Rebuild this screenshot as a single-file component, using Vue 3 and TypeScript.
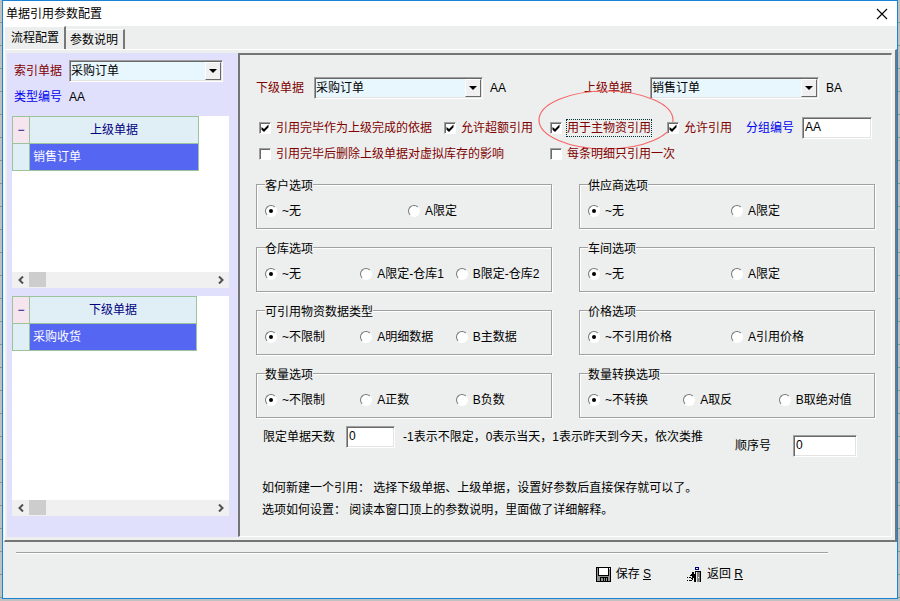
<script setup lang="ts">
import { reactive, ref } from 'vue'

interface OptionGroup {
  key: string
  title: string
  options: string[]
}

const documents = ['采购订单', '销售订单', '采购收货']
const indexDoc = ref('采购订单')
const lowerDoc = ref('采购订单')
const upperDoc = ref('销售订单')
const groupCode = ref('AA')
const dayLimit = ref('0')
const sequence = ref('0')
const activeTab = ref('流程配置')
const tabs = ['流程配置', '参数说明']

const lists = [
  { title: '上级单据', rows: ['销售订单'], kind: 'upper' },
  { title: '下级单据', rows: ['采购收货'], kind: 'lower' },
]

const flags = reactive([
  { id: 'basis', label: '引用完毕作为上级完成的依据', on: true },
  { id: 'excess', label: '允许超额引用', on: true },
  { id: 'material', label: '用于主物资引用', on: true },
  { id: 'allow', label: '允许引用', on: true },
])
const removeEffect = ref(false)
const onceOnly = ref(false)

const groups: OptionGroup[] = [
  { key: 'customer', title: '客户选项', options: ['~无', 'A限定'] },
  { key: 'supplier', title: '供应商选项', options: ['~无', 'A限定'] },
  { key: 'store', title: '仓库选项', options: ['~无', 'A限定-仓库1', 'B限定-仓库2'] },
  { key: 'workshop', title: '车间选项', options: ['~无', 'A限定'] },
  { key: 'dataType', title: '可引用物资数据类型', options: ['~不限制', 'A明细数据', 'B主数据'] },
  { key: 'price', title: '价格选项', options: ['~不引用价格', 'A引用价格'] },
  { key: 'quantity', title: '数量选项', options: ['~不限制', 'A正数', 'B负数'] },
  { key: 'convert', title: '数量转换选项', options: ['~不转换', 'A取反', 'B取绝对值'] },
]
const chosen = reactive<Record<string, string>>(
  Object.fromEntries(groups.map((g) => [g.key, g.options[0]])),
)
</script>

<template>
  <div class="dialog">
    <header class="titlebar">
      <span>单据引用参数配置</span>
      <button class="close" type="button" aria-label="关闭">
        <svg width="12" height="12" viewBox="0 0 12 12"><path d="M1 1l10 10M11 1L1 11" stroke="#000" stroke-width="1.1" fill="none" /></svg>
      </button>
    </header>

    <nav class="tabs">
      <button
        v-for="t in tabs"
        :key="t"
        type="button"
        class="tab"
        :class="{ active: t === activeTab }"
        @click="activeTab = t"
      >{{ t }}</button>
    </nav>

    <div class="page">
      <aside class="side">
        <div class="side-form">
          <label class="maroon" for="index-doc">索引单据</label>
          <span class="combo">
            <select id="index-doc" v-model="indexDoc">
              <option v-for="d in documents" :key="d">{{ d }}</option>
            </select>
            <span class="drop"></span>
          </span>
          <span class="blue">类型编号</span>
          <span>AA</span>
        </div>

        <section v-for="l in lists" :key="l.kind" class="list" :class="l.kind">
          <table>
            <thead>
              <tr><th class="mark">−</th><th>{{ l.title }}</th></tr>
            </thead>
            <tbody>
              <tr v-for="r in l.rows" :key="r"><td class="lead"></td><td class="picked">{{ r }}</td></tr>
            </tbody>
          </table>
          <div class="scroll">
            <button type="button" aria-label="向左"><svg width="6" height="8" viewBox="0 0 6 8"><path d="M5 .5L1.5 4 5 7.5" /></svg></button>
            <span class="thumb"></span>
            <button type="button" aria-label="向右"><svg width="6" height="8" viewBox="0 0 6 8"><path d="M1 .5L4.500 4 1 7.5" /></svg></button>
          </div>
        </section>
      </aside>

      <main class="panel">
        <div class="docs">
          <label class="maroon" for="lower-doc">下级单据</label>
          <span class="combo">
            <select id="lower-doc" v-model="lowerDoc">
              <option v-for="d in documents" :key="d">{{ d }}</option>
            </select>
            <span class="drop"></span>
          </span>
          <span class="code">AA</span>
          <label class="maroon" for="upper-doc">上级单据</label>
          <span class="combo">
            <select id="upper-doc" v-model="upperDoc">
              <option v-for="d in documents" :key="d">{{ d }}</option>
            </select>
            <span class="drop"></span>
          </span>
          <span class="code">BA</span>
        </div>

        <div class="flags">
          <label v-for="f in flags" :key="f.id" class="check" :class="f.id">
            <input v-model="f.on" type="checkbox" />
            <span>{{ f.label }}</span>
            <svg v-if="f.id === 'material'" class="ring" width="136" height="60" viewBox="0 0 136 60">
              <ellipse cx="68" cy="30" rx="67" ry="29" fill="none" stroke="#f56a6a" stroke-width="1.2" />
            </svg>
          </label>
          <label class="blue" for="group-code">分组编号</label>
          <input id="group-code" v-model="groupCode" class="box" type="text" />
          <label class="check wide"><input v-model="removeEffect" type="checkbox" /><span>引用完毕后删除上级单据对虚拟库存的影响</span></label>
          <label class="check wide"><input v-model="onceOnly" type="checkbox" /><span>每条明细只引用一次</span></label>
        </div>

        <div class="groups">
          <fieldset v-for="g in groups" :key="g.key">
            <legend>{{ g.title }}</legend>
            <div class="radios" :class="{ three: g.options.length === 3 }">
              <label v-for="o in g.options" :key="o">
                <input v-model="chosen[g.key]" type="radio" :name="g.key" :value="o" />
                <span>{{ o }}</span>
              </label>
            </div>
          </fieldset>
        </div>

        <div class="limits">
          <div class="limit">
            <label for="day-limit">限定单据天数</label>
            <input id="day-limit" v-model="dayLimit" class="box days" type="text" />
            <span>-1表示不限定，0表示当天，1表示昨天到今天，依次类推</span>
          </div>
          <div class="limit order">
            <label for="sequence">顺序号</label>
            <input id="sequence" v-model="sequence" class="box seq" type="text" />
          </div>
        </div>

        <div class="notes">
          <p>如何新建一个引用： 选择下级单据、上级单据，设置好参数后直接保存就可以了。</p>
          <p>选项如何设置： 阅读本窗口顶上的参数说明，里面做了详细解释。</p>
        </div>
      </main>
    </div>

    <footer class="footer">
      <hr />
      <div class="actions">
        <button type="button">
          <svg width="15" height="15" viewBox="0 0 15 15" shape-rendering="crispEdges">
            <rect width="15" height="15" fill="#000" />
            <path d="M1 1h1v13H1zM13 2h1v12h-1zM2 9h11v1H2zM2 10h2v4H2zM12 10h1v4h-1z" fill="#909090" />
            <rect x="3" y="1" width="9" height="7" fill="#fff" />
            <rect x="13" y="1" width="1" height="1" fill="#fff" />
            <path d="M5 11h2v3H5zM8 11h1v3H8zM10 11h1v3h-1z" fill="#909090" />
          </svg>
          <span>保存 <u>S</u></span>
        </button>
        <button type="button">
          <svg width="15" height="15" viewBox="0 0 15 15" shape-rendering="crispEdges">
            <path d="M8 0h4v3H8z" fill="#000080" />
            <path d="M9 1h2v1H9z" fill="#edefee" />
            <path d="M8 4h6v11h-1V5H9v10H8z" fill="#000" />
            <path d="M10 5h3v10h-3z" fill="#808080" />
            <path d="M11 10h1v1h-1z" fill="#fff" />
            <path d="M5 5h2v2H5zM4 7h4v2H4zM3 8h1v1H3zM5 9h3v2H5zM4 11h2v1H4zM7 11h1v4H7zM0 10h1v1H0zM2 10h2v1H2zM0 13h1v1H0zM2 13h3v1H2zM5 12h1v1H5z" fill="#000" />
          </svg>
          <span>返回 <u>R</u></span>
        </button>
      </div>
    </footer>
  </div>
</template>

<style>
body {
  margin: 0;
  background: repeating-linear-gradient(#bfc2c1 0 22px, #7d9f8d 22px 23px);
}
</style>

<style scoped>
.dialog,
.dialog * {
  box-sizing: border-box;
}
.dialog {
  display: flex;
  flex-direction: column;
  min-height: calc(100vh - 2px);
  margin: 0 2px 2px;
  border: 1px solid #1883d7;
  background: #edefee;
  color: #000;
  font: 12px/18px "Liberation Sans", "Noto Sans CJK SC", sans-serif;
  white-space: nowrap;
}
button,
input,
select {
  margin: 0;
  padding: 0;
  border: 0;
  font: inherit;
  color: inherit;
  background: none;
}
.maroon {
  color: #800000;
}
.blue {
  color: #0000f0;
}
.titlebar {
  display: flex;
  align-items: center;
  justify-content: space-between;
  height: 25px;
  padding: 0 9px 0 3px;
  background: #fff;
}
.close {
  display: flex;
}
.tabs {
  display: flex;
  align-items: flex-end;
  height: 23px;
  padding-left: 1px;
}
.tab {
  height: 20px;
  padding: 0 5px 0 4px;
  border-top: 1px solid #fff;
  border-right: 2px solid #777;
}
.tab.active {
  height: 23px;
  padding: 0 5px 0 6px;
  border-left: 1px solid #fff;
}
.page {
  display: flex;
  flex: 1;
  margin-left: 1px;
  padding: 3px 3px 3px 2px;
  border: 1px solid #fff;
  border-right: 2px solid #757575;
  border-bottom: 2px solid #757575;
}
.side {
  display: flex;
  flex-direction: column;
  gap: 8px;
  width: 231px;
  padding: 7px 9px 21px 5px;
  background: #e0e0fc;
}
.side-form {
  display: grid;
  grid-template-columns: 55px 1fr;
  align-items: center;
  row-gap: 6px;
  padding: 0 6px 2px 2px;
}
.combo {
  position: relative;
  display: block;
}
.combo select,
.box {
  display: block;
  width: 100%;
  height: 22px;
  padding: 0 2px 2px;
  border: 1px solid #a0a0a0;
  border-right-color: #fff;
  border-bottom-color: #fff;
  border-radius: 0;
  box-shadow: inset 1px 1px #696969, inset -1px -1px #e3e3e3;
  background: #fff;
  outline: none;
}
.combo select {
  appearance: none;
  padding: 0 1px;
  background: #e8f7fe;
}
.drop {
  position: absolute;
  top: 2px;
  right: 2px;
  bottom: 2px;
  display: flex;
  align-items: center;
  justify-content: center;
  width: 16px;
  border: 1px solid #fff;
  border-right-color: #696969;
  border-bottom-color: #696969;
  background: #f0f0f0;
  pointer-events: none;
}
.drop::after {
  content: "";
  border: 4px solid transparent;
  border-top-color: #000;
  border-bottom: 0;
}
.list {
  display: flex;
  flex-direction: column;
  justify-content: space-between;
  min-height: 172px;
  background: #fff;
}
.lower {
  flex: 1;
}
table {
  width: 187px;
  border-collapse: collapse;
  table-layout: fixed;
}
.lower table {
  width: 185px;
}
th,
td {
  height: 27px;
  padding: 0 3px;
  border: 1px solid #9cc49c;
  font-weight: normal;
}
th {
  background: #e0eff6;
  color: #000080;
  text-align: center;
}
th.mark {
  width: 17px;
  background: #f6e4ee;
}
.lead {
  background: #e0eff6;
}
.picked {
  background: #5566f2;
  color: #fff;
}
.scroll {
  display: flex;
  height: 16px;
  background: #f0f0f0;
}
.scroll button {
  display: flex;
  align-items: center;
  justify-content: center;
  width: 17px;
}
.scroll button:last-child {
  margin-left: auto;
}
.scroll path {
  fill: none;
  stroke: #505050;
  stroke-width: 2;
}
.thumb {
  width: 17px;
  height: 15px;
  background: #cdcdcd;
}
.panel {
  flex: 1;
  padding: 22px 16px 14px;
  border: 2px solid #757575;
  border-right: 1px solid #fff;
  border-bottom: 1px solid #fff;
}
.docs {
  display: grid;
  grid-template-columns: 58px minmax(0, 1fr) 101px 66px minmax(0, 1fr) 56px;
  align-items: center;
}
.code {
  padding-left: 7px;
}
.flags {
  display: grid;
  grid-template-columns: 185px 106px 117px 79px 56px minmax(0, 1fr);
  align-items: center;
  row-gap: 7px;
  margin-top: 18px;
  padding: 0 3px;
}
.check {
  position: relative;
  display: flex;
  align-items: center;
  gap: 5px;
  color: #800000;
}
.check input {
  display: flex;
  flex: none;
  align-items: center;
  justify-content: center;
  appearance: none;
  width: 12px;
  height: 12px;
  border: 1px solid #a0a0a0;
  border-right-color: #fff;
  border-bottom-color: #fff;
  box-shadow: inset 1px 1px #696969;
  background: #fff;
}
.check input:checked::before {
  content: "";
  width: 8px;
  height: 8px;
  background: #000;
  clip-path: polygon(6% 38%, 38% 62%, 94% 6%, 94% 42%, 38% 100%, 6% 72%);
}
.check span {
  line-height: 16px;
}
.material span {
  outline: 1px dotted #003030;
}
.wide {
  grid-column: span 2;
}
.ring {
  position: absolute;
  left: -12px;
  top: -30px;
  pointer-events: none;
}
.groups {
  display: grid;
  grid-template-columns: repeat(2, minmax(0, 1fr));
  gap: 9px 27px;
  margin-top: 13px;
}
fieldset {
  min-width: 0;
  margin: 0;
  padding: 9px 0 8px 8px;
  border: 1px solid #a0a0a0;
  box-shadow: 1px 1px #fff, inset 1px 1px #fff;
}
legend {
  padding: 4px 0 0;
  line-height: 14px;
  background: #edefee;
}
.radios {
  display: grid;
  grid-template-columns: repeat(2, minmax(0, 1fr));
}
.radios.three {
  grid-template-columns: repeat(3, minmax(0, 1fr));
}
.radios label {
  display: flex;
  align-items: center;
  gap: 5px;
}
.radios input {
  display: flex;
  flex: none;
  align-items: center;
  justify-content: center;
  appearance: none;
  width: 12px;
  height: 12px;
  border: 1px solid #777;
  border-right-color: #fff;
  border-bottom-color: #fff;
  border-radius: 50%;
  background: #fff;
}
.radios input:checked::before {
  content: "";
  width: 4px;
  height: 4px;
  border-radius: 50%;
  background: #000;
}
.limits {
  display: flex;
  align-items: flex-start;
  justify-content: space-between;
  height: 31px;
  margin-top: 8px;
  padding: 0 18px 0 7px;
}
.limit {
  display: flex;
  align-items: center;
}
.order {
  align-self: flex-end;
  gap: 22px;
}
.days {
  width: 49px;
  margin: 0 8px 0 11px;
}
.seq {
  width: 64px;
}
.notes {
  margin-top: 20px;
  padding-left: 6px;
  line-height: 22px;
}
.notes p {
  margin: 0;
}
.footer {
  height: 56px;
  padding: 10px 69px 0 13px;
}
hr {
  margin: 0;
  border: 0;
  border-top: 1px solid #a0a0a0;
  border-bottom: 1px solid #fff;
}
.actions {
  display: flex;
  justify-content: flex-end;
  gap: 36px;
  padding: 11px 85px 0 0;
}
.actions button {
  display: flex;
  align-items: center;
  gap: 5px;
}
</style>
